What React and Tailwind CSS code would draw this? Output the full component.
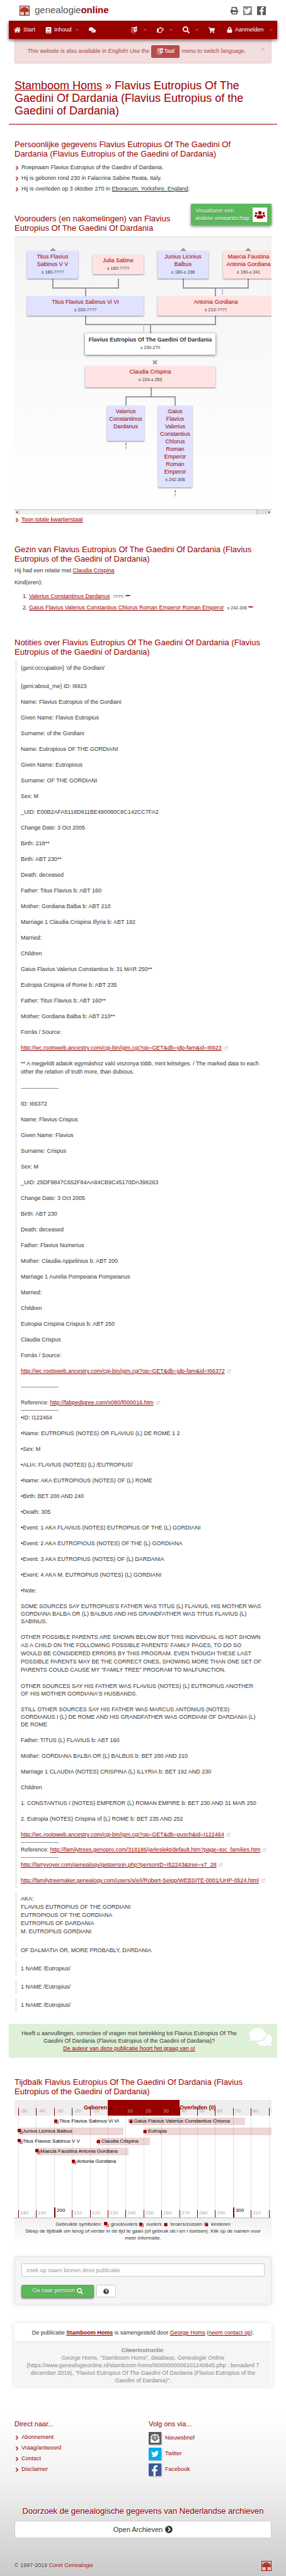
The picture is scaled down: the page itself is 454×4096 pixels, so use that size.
import React from "react";
import {
  FaHome,
  FaBook,
  FaComments,
  FaRegHandPointRight,
  FaSearch,
  FaShoppingCart,
  FaLock,
  FaPrint,
  FaTwitter,
  FaFacebookF,
  FaUsers,
  FaTimes,
  FaChevronRight,
  FaQuestionCircle,
  FaChevronCircleRight,
  FaEnvelopeOpenText,
  FaCaretLeft,
  FaCaretRight,
} from "react-icons/fa";
import { ChevronDown, ExternalLink } from "lucide-react";

function TreeLogo() {
  return (
    <svg viewBox="0 0 28 28" className="size-4 shrink-0" aria-hidden="true">
      <rect x="0.75" y="0.75" width="26.5" height="26.5" fill="#dcc6c3" stroke="#990000" strokeWidth="1.5" />
      <path
        d="M2 15c-1-3 1-5 3-6 0-3 4-5 6-4 3-2 7-1 8 1 3 0 5 2 5 4 2 1 3 4 1 6-2 2-5 2-7 1l-2 1v4l2 4h-6l2-4v-4l-3-1c-3 1-8 1-9-2z"
        fill="#b5301f"
      />
      <path d="M13 16h3v9h-4z" fill="#a32a1c" />
      <path d="M7 11l4-2 5 1 4-1" stroke="#c9523f" strokeWidth="1.4" fill="none" />
    </svg>
  );
}

function LanguageIcon({ className }) {
  return (
    <svg viewBox="0 0 18 20" className={className} aria-hidden="true">
      <path d="M1 5l7-2v12l-7 2z" fill="none" stroke="currentColor" strokeWidth="1" />
      <path d="M3 8l4-1M5 6v2c0 2-1 4-2 5M4 9l3 4" fill="none" stroke="currentColor" strokeWidth="0.9" />
      <path d="M9 2.500l8-2.500v14l-8 2z" fill="currentColor" />
      <path d="M11 12l2-7 2.500 6M11.700 9.800l2.800-.6" fill="none" stroke="#990000" strokeWidth="1.200" />
      <path d="M3 1l6 2-6 1z" fill="currentColor" />
      <path d="M4 18c3 2 7 2 10-.5" fill="none" stroke="currentColor" strokeWidth="1" />
    </svg>
  );
}

function Dots() {
  return (
    <svg viewBox="0 0 14 4" className="ml-[2px] inline-block h-[2px] w-2 align-[3px]" aria-hidden="true">
      <path d="M0 0h4v4H0zM5 0h4v4H5zM10 0h4v4h-4z" fill="#990000" />
    </svg>
  );
}

function A({ children, className = "" }) {
  return (
    <a href="#" className={"text-[#990000] underline " + className}>
      {children}
    </a>
  );
}

function Ext({ children }) {
  return (
    <>
      <A>{children}</A>
      <ExternalLink className="ml-[3px] inline-block size-[7px] align-[-1px] text-[#aaaaaa]" />
    </>
  );
}

function H2({ children, className = "" }) {
  return <h2 className={"text-[13px] leading-[15px] text-[#990000] " + className}>{children}</h2>;
}

function NavItem({ icon, label, menu, className }) {
  return (
    <a href="#" aria-label={label || "menu"} className={"flex items-center border-r border-[#aa0000] pl-2 text-white " + className}>
      {icon}
      {label && <span className="ml-1">{label}</span>}
      {menu && <ChevronDown className="mr-[6px] ml-auto size-[7px]" strokeWidth={2} />}
    </a>
  );
}

function Header() {
  return (
    <header>
      <div className="flex h-[33px] items-center pr-8 pl-[31px]">
        <TreeLogo />
        <span className="ml-2 text-[15px] text-[#555555]">
          genealogie<b className="text-[#990000]">online</b>
        </span>
        <div className="ml-auto flex items-center gap-2">
          <FaPrint className="size-3 text-[#555555]" />
          <a href="#" aria-label="Twitter" className="flex size-[14px] items-center justify-center bg-[#888888] text-white">
            <FaTwitter className="size-3" />
          </a>
          <a href="#" aria-label="Facebook" className="flex size-[14px] items-end justify-center bg-[#5c5c5c] text-white">
            <FaFacebookF className="size-[13px]" />
          </a>
        </div>
      </div>
      <nav className="relative z-10 mx-[14px] flex h-[29px] bg-[#990000] text-[9px] shadow-[0_2px_5px_rgba(0,0,0,0.6)]">
        <NavItem className="w-[50px]" icon={<FaHome className="size-[11px]" />} label="Start" />
        <NavItem className="w-[69px]" icon={<FaBook className="size-[10px]" />} label="Inhoud" menu />
        <NavItem className="w-[30px]" icon={<FaComments className="size-[11px]" />} />
        <div className="grow border-r border-[#aa0000]" />
        <NavItem className="w-[41px]" icon={<LanguageIcon className="h-[11px] w-[10px]" />} menu />
        <NavItem className="w-[41px]" icon={<FaRegHandPointRight className="size-[11px]" />} menu />
        <NavItem className="w-[41px]" icon={<FaSearch className="size-[11px]" />} menu />
        <NavItem className="w-[29px]" icon={<FaShoppingCart className="size-[10px]" />} />
        <NavItem className="w-[88px] border-r-0" icon={<FaLock className="size-[9px]" />} label="Aanmelden" menu />
      </nav>
    </header>
  );
}

function Alert() {
  return (
    <div className="relative mx-[23px] flex h-[39px] items-center justify-center rounded-b-[2px] border border-[#ebccd1] bg-[#f2dede] pr-5 text-[9px] text-[#a94442]">
      This website is also available in English! Use the
      <button className="mx-[3px] flex h-5 w-[45px] items-center justify-center gap-[2px] rounded-[2px] border border-[#a94442] bg-[#b84c4c] text-white">
        <LanguageIcon className="h-[11px] w-[10px]" />
        Taal
      </button>
      menu to switch language.
      <button aria-label="Sluiten" className="absolute top-3 right-[9px] text-[#dcb6b8]">
        <FaTimes className="size-[7px]" />
      </button>
    </div>
  );
}

function Person({ name, dates, kind, className }) {
  const tone = kind === "m" ? "bg-[#e0e2ff]" : "bg-[#ffe3e3]";
  return (
    <div className={"absolute pt-[3px] text-center shadow-[0_1px_2px_rgba(0,0,0,0.45)] " + tone + " " + className}>
      <a href="#" className="block text-[9px] leading-3 text-[#990000]">
        {name.map((line, i) => (
          <span key={i} className="block whitespace-nowrap">
            {line}
          </span>
        ))}
      </a>
      {dates && <div className="text-[7px] leading-[13px] text-[#333333]">{dates}</div>}
    </div>
  );
}

function FamilyTree() {
  return (
    <div>
      <div className="relative h-[434px] overflow-hidden border-t border-[#dddddd] bg-linear-to-b from-[#f4f4f4] to-white">
        <svg width="412" height="434" viewBox="0 0 412 434" className="absolute top-0 left-0" aria-hidden="true">
          <g fill="none" stroke="#999999" strokeWidth="2">
            <path d="M61 66V81H165V66M113 81V95M268 66V81H371V66M319 81V95" />
            <path d="M113 125V139H319V125M216 139V154M217 239V254M177 269V254H255V269" />
          </g>
          <path d="M330 81v11" stroke="#c0c2dc" strokeWidth="2" />
          <path d="M205 139v11" stroke="#e8c4c6" strokeWidth="2" />
          <path d="M55 23l6-6 6 6zM262 23l6-6 6 6zM365 23l6-6 6 6z" fill="#999999" />
          <path d="M220 196l6 6M226 196l-6 6" stroke="#999999" strokeWidth="2.400" />
          <path d="M176 327h2v4h-2zM176 333h2v2h-2zM176 336h2v1h-2zM254 402h2v4h-2zM254 408h2v2h-2zM254 411h2v1h-2z" fill="#999999" />
        </svg>
        <Person kind="m" name={["Titus Flavius", "Sabinus V V"]} dates="± 180-????" className="top-[22px] left-5 h-[44px] w-[81px]" />
        <Person kind="f" name={["Julia Sabine"]} dates="± 160-????" className="top-[28px] left-[124px] h-[31px] w-[81px]" />
        <Person kind="m" name={["Junius Licinius", "Balbus"]} dates="± 180-± 238" className="top-[22px] left-[227px] h-[44px] w-[81px]" />
        <Person kind="f" name={["Maecia Faustina", "Antonia Gordiana"]} dates="± 190-± 241" className="top-[22px] left-[331px] h-[44px] w-[81px]" />
        <Person kind="m" name={["Titus Flavius Sabinus Vi VI"]} dates="± 200-????" className="top-[94px] left-5 h-[31px] w-[185px]" />
        <Person kind="f" name={["Antonia Gordiana"]} dates="± 210-????" className="top-[94px] left-[227px] h-[31px] w-[185px]" />
        <div className="absolute top-[153px] left-[112px] h-[34px] w-[207px] bg-white pt-1 text-center text-[#333333] shadow-[0_1px_4px_rgba(0,0,0,0.6)]">
          <div className="text-[9px] leading-3 font-bold whitespace-nowrap">Flavius Eutropius Of The Gaedini Of Dardania</div>
          <div className="text-[7px] leading-[13px]">± 230-270</div>
        </div>
        <Person kind="f" name={["Claudia Crispina"]} dates="± 224-± 253" className="top-[205px] left-[112px] h-[34px] w-[207px]" />
        <Person kind="m" name={["Valerius", "Constantinus", "Dardanus"]} className="top-[268px] left-[147px] h-[56px] w-[59px]" />
        <Person
          kind="m"
          name={["Gaius", "Flavius", "Valerius", "Constantius", "Chlorus", "Roman", "Emperor", "Roman", "Emperor"]}
          dates="± 242-306"
          className="top-[268px] left-[228px] h-[130px] w-[54px]"
        />
      </div>
      <div className="flex h-2 border-t border-[#bbbbbb] bg-[#f1f0ee] text-[#444444]">
        <button aria-label="Naar links" className="flex w-2 items-center justify-center border-r border-[#bbbbbb]">
          <FaCaretLeft className="size-[7px]" />
        </button>
        <div className="ml-auto w-4 border-x border-[#bbbbbb] bg-[#e2e1df]" />
        <button aria-label="Naar rechts" className="flex w-2 items-center justify-center">
          <FaCaretRight className="size-[7px]" />
        </button>
      </div>
    </div>
  );
}

function Quote({ children }) {
  return <blockquote className="ml-px border-l-3 border-[#eeeeee] py-[6px] pl-[6px]">{children}</blockquote>;
}

const firstNotes = [
  "{geni:about_me} ID: I6923",
  "Name: Flavius Eutropius of the Gordiani",
  "Given Name: Flavius Eutropius",
  "Surname: of the Gordiani",
  "Name: Eutropious OF THE GORDIANI",
  "Given Name: Eutropious",
  "Surname: OF THE GORDIANI",
  "Sex: M",
  "_UID: E00B2AFA5118D811BE490080C8C142CC7FA2",
  "Change Date: 3 Oct 2005",
  "Birth: 218**",
  "Birth: ABT 230**",
  "Death: deceased",
  "Father: Titus Flavius b: ABT 160",
  "Mother: Gordiana Balba b: ABT 210",
  "Marriage 1 Claudia Crispina Illyria b: ABT 192",
  "Married:",
  "Children",
  "Gaius Flavius Valerius Constantius b: 31 MAR 250**",
  "Eutropia Crispina of Rome b: ABT 235",
  "Father: Titus Flavius b: ABT 160**",
  "Mother: Gordiana Balba b: ABT 210**",
  "Forrás / Source:",
];

const secondNotes = [
  "ID: I66372",
  "Name: Flavius Crispus",
  "Given Name: Flavius",
  "Surname: Crispus",
  "Sex: M",
  "_UID: 25DF9847C652F84AA84CB9C45170DA398263",
  "Change Date: 3 Oct 2005",
  "Birth: ABT 230",
  "Death: deceased",
  "Father: Flavius Numerius",
  "Mother: Claudia Appelinius b: ABT 200",
  "Marriage 1 Aurelia Pompeiana Pompeianus",
  "Married:",
  "Children",
  "Eutropia Crispina Crispus b: ABT 250",
  "Claudia Crispus",
  "Forrás / Source:",
];

const thirdNotes = [
  "•Name: EUTROPIUS (NOTES) OR FLAVIUS (L) DE ROME 1 2",
  "•Sex: M",
  "•ALIA: FLAVIUS (NOTES) (L) /EUTROPIUS/",
  "•Name: AKA EUTROPIOUS (NOTES) OF (L) ROME",
  "•Birth: BET 200 AND 240",
  "•Death: 305",
  "•Event: 1 AKA FLAVIUS (NOTES) EUTROPIUS OF THE (L) GORDIANI",
  "•Event: 2 AKA EUTROPIOUS (NOTES) OF THE (L) GORDIANA",
  "•Event: 3 AKA EUTROPIUS (NOTES) OF (L) DARDANIA",
  "•Event: 4 AKA M. EUTROPIUS (NOTES) (L) GORDIANI",
  "•Note:",
];

const fourthNotes = [
  "Father: TITUS (L) FLAVIUS b: ABT 160",
  "Mother: GORDIANA BALBA OR (L) BALBUS b: BET 200 AND 210",
  "Marriage 1 CLAUDIA (NOTES) CRISPINA (L) ILLYRIA b: BET 192 AND 230",
  "Children",
  "1. CONSTANTIUS I (NOTES) EMPEROR (L) ROMAN EMPIRE b: BET 230 AND 31 MAR 250",
  "2. Eutropia (NOTES) Crispina of (L) ROME b: BET 235 AND 252",
];

const RULE = "--------------------";

function Lines({ items }) {
  return items.map((text, i) => <p key={i}>{text}</p>);
}

function Notes() {
  return (
    <div className="mt-[6px] flex flex-col gap-[5px] text-[9px] leading-3">
      <Quote>{"{geni:occupation} 'of the Gordiani'"}</Quote>
      <Quote>
        <div className="flex flex-col gap-[13px]">
          <Lines items={firstNotes} />
          <p>
            <Ext>http://wc.rootsweb.ancestry.com/cgi-bin/igm.cgi?op=GET&amp;db=jdp-fam&amp;id=I6923</Ext>
          </p>
          <p className="leading-[13px]">
            ** A megjelölt adatok egymáshoz való viszonya több, mint kétséges. / The marked data to each
            <br />
            other the relation of truth more, than dubious.
          </p>
          <p>{RULE}</p>
          <Lines items={secondNotes} />
          <p>
            <Ext>http://wc.rootsweb.ancestry.com/cgi-bin/igm.cgi?op=GET&amp;db=jdp-fam&amp;id=I66372</Ext>
          </p>
          <p>{RULE}</p>
          <p>
            Reference: <Ext>http://fabpedigree.com/s080/f000016.htm</Ext>
            <br />
            {RULE}
            <br />
            •ID: I122464
          </p>
          <Lines items={thirdNotes} />
          <p>
            SOME SOURCES SAY EUTROPIUS'S FATHER WAS TITUS (L) FLAVIUS, HIS MOTHER WAS
            <br />
            GORDIANA BALBA OR (L) BALBUS AND HIS GRANDFATHER WAS TITUS FLAVIUS (L)
            <br />
            SABINUS.
          </p>
          <p className="leading-[13px]">
            OTHER POSSIBLE PARENTS ARE SHOWN BELOW BUT THIS INDIVIDUAL IS NOT SHOWN
            <br />
            AS A CHILD ON THE FOLLOWING POSSIBLE PARENTS' FAMILY PAGES, TO DO SO
            <br />
            WOULD BE CONSIDERED ERRORS BY THIS PROGRAM. EVEN THOUGH THESE LAST
            <br />
            POSSIBLE PARENTS MAY BE THE CORRECT ONES, SHOWING MORE THAN ONE SET OF
            <br />
            PARENTS COULD CAUSE MY "FAMILY TREE" PROGRAM TO MALFUNCTION.
          </p>
          <p>
            OTHER SOURCES SAY HIS FATHER WAS FLAVIUS (NOTES) (L) EUTROPIUS ANOTHER
            <br />
            OF HIS MOTHER GORDIANA'S HUSBANDS.
          </p>
          <p>
            STILL OTHER SOURCES SAY HIS FATHER WAS MARCUS ANTONIUS (NOTES)
            <br />
            GORDIANUS I (L) DE ROME AND HIS GRANDFATHER WAS GORDIANI OF DARDANIA (L)
            <br />
            DE ROME
          </p>
          <Lines items={fourthNotes} />
          <p className="whitespace-nowrap">
            <Ext>http://wc.rootsweb.ancestry.com/cgi-bin/igm.cgi?op=GET&amp;db=pusch&amp;id=I122464</Ext>
            <br />
            {RULE}
            <br />
            Reference: <Ext>http://familytrees.genopro.com/318186/jarleslekt/default.htm?page=toc_families.htm</Ext>
            <br />
            {RULE}
            <br />
            <Ext>http://larryvoyer.com/genealogy/getperson.php?personID=I52243&amp;tree=v7_28</Ext>
          </p>
          <p className="whitespace-nowrap">
            <Ext>http://familytreemaker.genealogy.com/users/s/e/i/Robert-Seipp/WEBSITE-0001/UHP-0524.html</Ext>
          </p>
        </div>
      </Quote>
      <Quote>
        <p className="leading-[13px]">
          AKA:
          <br />
          FLAVIUS EUTROPIUS OF THE GORDIANI
          <br />
          EUTROPIOUS OF THE GORDIANA
          <br />
          EUTROPIUS OF DARDANIA
          <br />
          M. EUTROPIUS GORDIANI
        </p>
      </Quote>
      <Quote>OF DALMATIA OR, MORE PROBABLY, DARDANIA</Quote>
      <Quote>1 NAME /Eutropius/</Quote>
      <Quote>1 NAME /Eutropius/</Quote>
      <Quote>1 NAME /Eutropius/</Quote>
    </div>
  );
}

function Relation({ kind }) {
  return (
    <svg viewBox="0 0 14 14" className="size-2 shrink-0" aria-hidden="true">
      {kind === "grandparent" && (
        <>
          <path d="M0 0h9v9H0z" fill="#990000" />
          <path d="M11 3v7.500H3M13.500 5.500v7.500H6" fill="none" stroke="#990000" strokeWidth="1.100" />
        </>
      )}
      {kind === "parent" && (
        <>
          <path d="M0 2h9v9H0z" fill="#990000" />
          <path d="M11.500 4.500v8.500H3" fill="none" stroke="#990000" strokeWidth="1.200" />
        </>
      )}
      {kind === "sibling" && <path d="M1 3h9v9H1z" fill="#990000" />}
      {kind === "child" && (
        <>
          <path d="M3 4h8v8H3z" fill="#990000" />
          <path d="M0.600 11V2.600H10" fill="none" stroke="#990000" strokeWidth="1.200" />
        </>
      )}
    </svg>
  );
}

// Horizontal position of a year on the time line, in pixels.
const yearX = (year) => Math.round(6 + (year - 180) * 2.84);

const decades = Array.from({ length: 15 }, (_, i) => 180 + i * 10);

const people = [
  { name: "Titus Flavius Sabinus Vi VI", kind: "parent", from: 200, row: 0 },
  { name: "Gaius Flavius Valerius Constantius Chlorus", kind: "child", from: 242, to: 306, row: 0 },
  { name: "Junius Licinius Balbus", kind: "grandparent", from: 180, to: 238, row: 1 },
  { name: "Eutropia", kind: "sibling", from: 250, to: 340, row: 1 },
  { name: "Titus Flavius Sabinus V V", kind: "grandparent", from: 180, row: 2 },
  { name: "Claudia Crispina", kind: "sibling", from: 224, to: 253, row: 2 },
  { name: "Maecia Faustina Antonia Gordiana", kind: "grandparent", from: 190, to: 241, row: 3 },
  { name: "Antonia Gordiana", kind: "parent", from: 210, row: 4 },
];

function Timeline() {
  return (
    <div className="mt-[6px]">
      <div className="relative h-[188px] overflow-hidden border-b border-[#bbbbbb] text-[8px] leading-[10px]">
        <div className="h-[25px] bg-[#eeeeee]" />
        {decades.map((year) => (
          <div key={year} className="absolute top-0 h-full w-px bg-[#e3e3e3]" style={{ left: yearX(year) }} />
        ))}
        <div className="absolute top-0 h-[25px] bg-[#990000]" style={{ left: yearX(230), width: yearX(270) - yearX(230) }} />
        {decades.map((year) => {
          const major = year === 230;
          return (
            <div
              key={year}
              className={"absolute border-l pl-[2px] " + (major ? "top-[9px] h-4 border-[#660000] text-black" : "top-[13px] h-3 border-[#770000] text-[#aaaaaa]")}
              style={{ left: yearX(year) }}
            >
              {year - 230}
            </div>
          );
        })}
        {decades.map((year) => {
          const major = year % 100 === 0;
          return (
            <div
              key={year}
              className={"absolute bottom-0 border-[#770000] pl-[2px] " + (major ? "h-4 border-l-2 text-black" : "h-3 border-l text-[#aaaaaa]")}
              style={{ left: yearX(year) }}
            >
              {year}
            </div>
          );
        })}
        <b className="absolute top-[7px] w-12 text-right text-[9px] text-[#990000]" style={{ left: yearX(230) - 49 }}>
          Geboren
        </b>
        <b className="absolute top-[7px] text-[9px] whitespace-nowrap text-[#990000]" style={{ left: yearX(270) }}>
          Overleden (0)
        </b>
        {people.map((p) => (
          <React.Fragment key={p.name}>
            {p.to && (
              <div
                className="absolute h-3 bg-[#990000]/16"
                style={{ left: yearX(p.from) + 2, top: 28 + p.row * 16, width: yearX(p.to) - yearX(p.from) }}
              />
            )}
            <a
              href="#"
              className="absolute flex h-3 items-center whitespace-nowrap text-black"
              style={{ left: yearX(p.from) - (p.kind === "parent" ? 0 : 1), top: 28 + p.row * 16 }}
            >
              <Relation kind={p.kind} />
              {p.name}
            </a>
          </React.Fragment>
        ))}
      </div>
      <div className="bg-linear-to-b from-[#f1f1f1] to-white py-1 text-center text-[8px] leading-[11px]">
        <div className="flex items-center justify-center gap-[3px]">
          Gebruikte symbolen: <Relation kind="grandparent" />
          grootouders <Relation kind="parent" />
          ouders <Relation kind="sibling" />
          broers/zussen <Relation kind="child" />
          kinderen
        </div>
        Sleep de tijdbalk om terug of verder in de tijd te gaan (of gebruik de l en r toetsen). Klik op de namen voor
        <br />
        meer informatie.
      </div>
    </div>
  );
}

function Search() {
  return (
    <form className="mt-5 rounded-[2px] border border-[#e3e3e3] bg-[#f5f5f5] p-[10px] text-[9px] shadow-[0_1px_8px_rgba(0,0,0,0.1)]" onSubmit={(e) => e.preventDefault()}>
      <input
        type="text"
        aria-label="zoek op naam binnen deze publicatie"
        placeholder="zoek op naam binnen deze publicatie"
        className="block h-[21px] w-full rounded-[2px] border border-[#cccccc] bg-white px-[7px] placeholder:text-[#999999]"
      />
      <div className="mt-[13px] flex gap-1">
        <button className="flex h-5 w-[115px] items-center justify-center gap-[3px] rounded-[2px] border border-[#4cae4c] bg-[#5cb85c] text-white shadow-[0_2px_3px_rgba(0,0,0,0.5)] [text-shadow:0_1px_1px_rgba(0,0,0,0.4)]">
          Ga naar persoon <FaSearch className="size-[10px]" />
        </button>
        <button type="button" aria-label="Help" className="flex h-5 w-[31px] items-center justify-center rounded-[2px] border border-[#cccccc] bg-white">
          <FaQuestionCircle className="size-[9px]" />
        </button>
      </div>
    </form>
  );
}

function Publication() {
  return (
    <div className="mt-[30px] rounded-[2px] border border-white bg-white text-center text-[9px] leading-3 shadow-[0_1px_8px_rgba(0,0,0,0.12)]">
      <div className="border-b border-[#dddddd] py-2">
        De publicatie <A className="font-bold">Stamboom Homs</A> is samengesteld door <A>George Homs</A> (<A>neem contact op</A>).
      </div>
      <div className="bg-[#f5f5f5] py-[7px] text-[#888888]">
        <b>Citeerinstructie</b>:
        <br />
        George Homs, "Stamboom Homs", database, <i>Genealogie Online</i>
        <br />
        (https://www.genealogieonline.nl/stamboom-homs/I6000000006101240845.php : benaderd 7
        <br />
        december 2019), "Flavius Eutropius Of The Gaedini Of Dardania (Flavius Eutropius of the
        <br />
        Gaedini of Dardania)".
      </div>
    </div>
  );
}

function Footer() {
  const socials = [
    { name: "Nieuwsbrief", box: "bg-[#5c5c5c] items-center justify-center", icon: <FaEnvelopeOpenText className="size-[14px]" /> },
    { name: "Twitter", box: "bg-[#00aced] items-center justify-center", icon: <FaTwitter className="size-3" /> },
    { name: "Facebook", box: "bg-[#3b5998] items-end justify-end pr-[2px]", icon: <FaFacebookF className="size-[17px]" /> },
  ];
  return (
    <footer className="bg-linear-to-b from-white from-12% via-[#f2f2f2] via-48% to-[#cacaca] px-[23px] pt-[47px] pb-2 text-[9px] [text-shadow:1px_1px_2px_#ffffff]">
      <div className="grid grid-cols-[213px_1fr]">
        <div>
          <h3 className="text-[11px] leading-[17px] text-[#990000]">Direct naar...</h3>
          <ul className="mt-1 leading-[17px]">
            {["Abonnement", "Vraag/antwoord", "Contact", "Disclaimer"].map((t) => (
              <li key={t} className="flex items-center gap-[3px] text-[#990000]">
                <FaChevronRight className="size-[8px]" />
                <a href="#">{t}</a>
              </li>
            ))}
          </ul>
        </div>
        <div>
          <h3 className="text-[11px] leading-[17px] text-[#990000]">Volg ons via...</h3>
          <ul className="mt-1 flex flex-col gap-[5px]">
            {socials.map((s) => (
              <li key={s.name}>
                <a href="#" className="flex items-center gap-[6px] text-[#990000]">
                  <span className={"flex size-5 text-white shadow-[1px_1px_2px_rgba(0,0,0,0.3)] " + s.box}>{s.icon}</span>
                  {s.name}
                </a>
              </li>
            ))}
          </ul>
        </div>
      </div>
      <h2 className="mt-12 text-center text-[13px] leading-[15px] text-[#990000]">Doorzoek de genealogische gegevens van Nederlandse archieven</h2>
      <a href="#" className="mt-2 flex h-7 items-center justify-center gap-1 rounded-[3px] border border-[#cccccc] bg-white text-[11px]">
        Open Archieven <FaChevronCircleRight className="size-3" />
      </a>
      <div className="mt-9 flex items-center justify-between">
        <span>
          © 1997-2019{" "}
          <a href="#" className="text-[#990000]">
            Coret Genealogie
          </a>
        </span>
        <TreeLogo />
      </div>
    </footer>
  );
}

export default function App() {
  return (
    <div className="bg-white font-['Liberation_Sans',Arial,sans-serif] text-[#333333]">
      <Header />
      <Alert />
      <main>
        <h1 className="mx-[23px] mt-[25px] text-[18px] leading-5 text-[#990000]">
          <A>Stamboom Homs</A> » Flavius Eutropius Of The
          <br />
          Gaedini Of Dardania (Flavius Eutropius of the
          <br />
          Gaedini of Dardania)
        </h1>
        <hr className="mx-[14px] mt-[11px] border-[#990000]" />
        <div className="mx-[23px]">
          <H2 className="mt-6">
            Persoonlijke gegevens Flavius Eutropius Of The Gaedini Of
            <br />
            Dardania (Flavius Eutropius of the Gaedini of Dardania)
          </H2>
          <ul className="mt-[6px] text-[9px] leading-[17px]">
            {[
              "Roepnaam Flavius Eutropius of the Gaedini of Dardania.",
              "Hij is geboren rond 230 in Falacrina Sabine Reata, Italy.",
              <>
                Hij is overleden op 3 oktober 270 in{" "}
                <a href="#" className="underline">
                  Eboracum, Yorkshire, England
                </a>
                .
              </>,
            ].map((t, i) => (
              <li key={i} className="flex items-center gap-[3px]">
                <FaChevronRight className="size-[8px] text-[#990000]" />
                <span>{t}</span>
              </li>
            ))}
          </ul>
          <div className="mt-[15px] flex items-end justify-between">
            <H2>
              Voorouders (en nakomelingen) van Flavius
              <br />
              Eutropius Of The Gaedini Of Dardania
            </H2>
            <a
              href="#"
              className="mb-3 flex h-[34px] w-[128px] items-center justify-between rounded-[2px] bg-[#5cb85c] px-[7px] text-[9px] leading-3 whitespace-nowrap text-white shadow-[0_2px_4px_rgba(0,0,0,0.5)] [text-shadow:0_1px_1px_rgba(0,0,0,0.4)]"
            >
              <span>
                Visualiseer een
                <br />
                andere verwantschap
              </span>
              <span className="flex size-[23px] items-center justify-center bg-white text-[#990000]">
                <FaUsers className="size-[17px]" />
              </span>
            </a>
          </div>
          <div className="mt-[6px]">
            <FamilyTree />
          </div>
          <div className="flex items-center gap-[3px] text-[9px] leading-[17px]">
            <FaChevronRight className="size-[8px] text-[#990000]" />
            <A>Toon totale kwartierstaat</A>
          </div>
          <H2 className="mt-[31px]">
            Gezin van Flavius Eutropius Of The Gaedini Of Dardania (Flavius
            <br />
            Eutropius of the Gaedini of Dardania)
          </H2>
          <div className="text-[9px] leading-[13px]">
            <p className="mt-[5px]">
              Hij had een relatie met <A>Claudia Crispina</A>
            </p>
            <p className="mt-[6px]">Kind(eren):</p>
            <ol className="mt-[9px] ml-[23px] flex list-decimal flex-col gap-[5px]">
              <li>
                <A>Valerius Constantinus Dardanus</A>
                <span className="ml-[5px] text-[7px]">????-</span>
                <Dots />
              </li>
              <li>
                <A>Gaius Flavius Valerius Constantius Chlorus Roman Emperor Roman Emperor</A>
                <span className="ml-[5px] text-[7px]">± 242-306</span>
                <Dots />
              </li>
            </ol>
          </div>
          <H2 className="mt-[41px]">
            Notities over Flavius Eutropius Of The Gaedini Of Dardania (Flavius
            <br />
            Eutropius of the Gaedini of Dardania)
          </H2>
          <Notes />
        </div>
        <div className="mx-[14px] mt-[18px] flex items-start bg-[#dff0d8] pr-2 text-[9px]">
          <p className="grow py-[9px] text-center leading-3">
            Heeft u aanvullingen, correcties of vragen met betrekking tot Flavius Eutropius Of The
            <br />
            Gaedini Of Dardania (Flavius Eutropius of the Gaedini of Dardania)?
            <br />
            <A>De auteur van deze publicatie hoort het graag van u!</A>
          </p>
          <FaComments className="mt-[3px] size-[36px] shrink-0 text-white" />
        </div>
        <div className="mx-[23px]">
          <H2 className="mt-[31px]">
            Tijdbalk Flavius Eutropius Of The Gaedini Of Dardania (Flavius
            <br />
            Eutropius of the Gaedini of Dardania)
          </H2>
          <Timeline />
          <Search />
          <Publication />
        </div>
      </main>
      <Footer />
    </div>
  );
}
